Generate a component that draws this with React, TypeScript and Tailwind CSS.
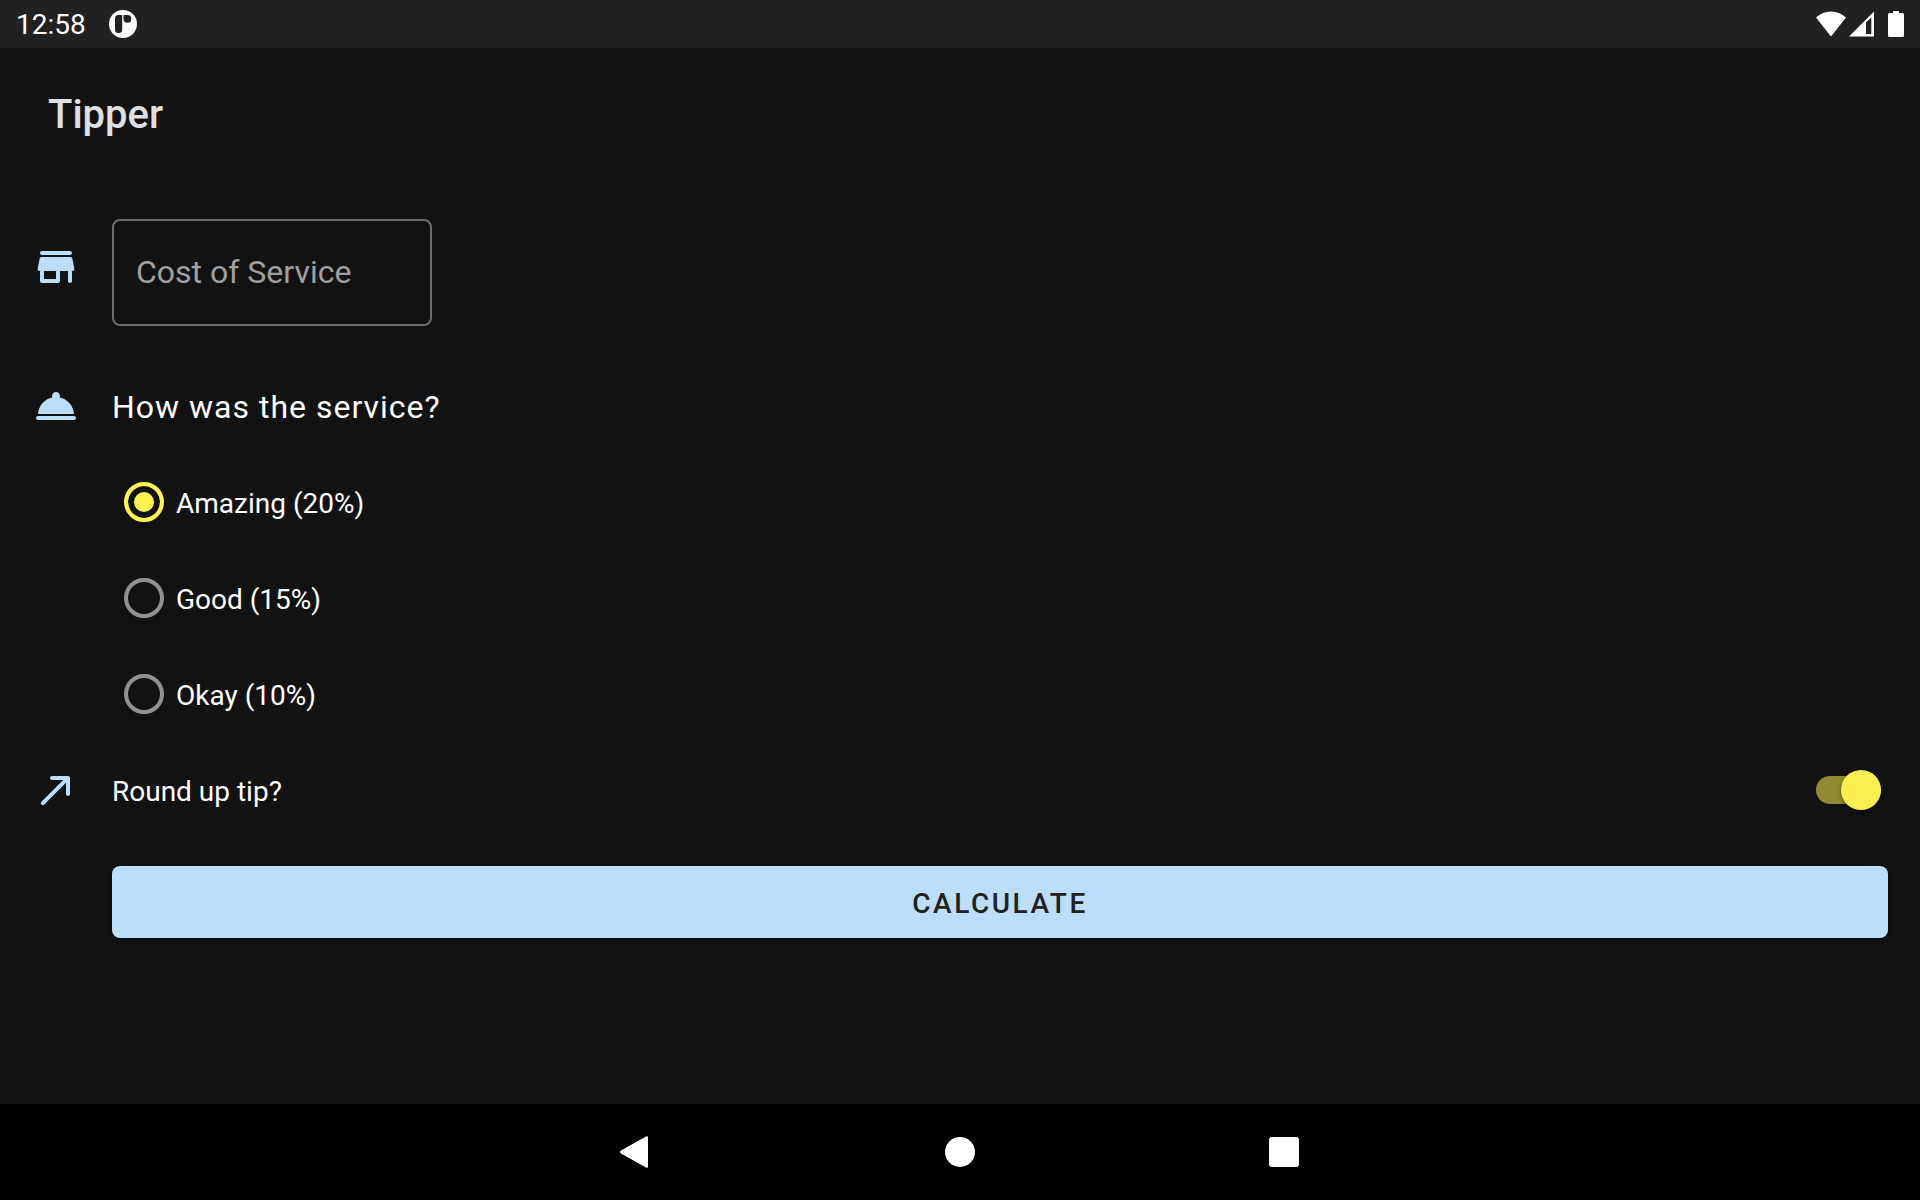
import { useState } from "react";

const ratings = ["Amazing (20%)", "Good (15%)", "Okay (10%)"];

const icons = {
  store:
    "M5 6h14c.55 0 1-.45 1-1s-.45-1-1-1H5c-.55 0-1 .45-1 1s.45 1 1 1zm15.16 1.8c-.09-.46-.5-.8-.98-.8H4.82c-.48 0-.89.34-.98.8l-1 5c-.12.62.35 1.2.98 1.2H4v5c0 .55.45 1 1 1h8c.55 0 1-.45 1-1v-5h4v5c0 .55.45 1 1 1s1-.45 1-1v-5h.18c.63 0 1.1-.58.98-1.2l-1-5zM12 18H6v-4h6v4z",
  roomService:
    "M3 17h18c.55 0 1 .45 1 1s-.45 1-1 1H3c-.55 0-1-.45-1-1s.45-1 1-1zm10.84-9.21c.1-.24.16-.51.16-.79 0-1.1-.9-2-2-2s-2 .9-2 2c0 .28.06.55.16.79C6.25 8.6 3.27 11.93 3 16h18c-.27-4.07-3.25-7.4-7.16-8.21z",
  callMade:
    "M9 6c0 .56.45 1 1 1h5.59L4.7 17.89c-.39.39-.39 1.02 0 1.41s1.02.39 1.41 0L17 8.41V14c0 .55.45 1 1 1s1-.45 1-1V6c0-.55-.45-1-1-1h-8c-.55 0-1 .45-1 1z",
};

function Icon({ path }: { path: string }) {
  return (
    <svg viewBox="0 0 24 24" className="size-12 shrink-0 fill-[#bbdefb]" aria-hidden="true">
      <path d={path} />
    </svg>
  );
}

function StatusBar() {
  return (
    <header className="flex h-12 items-center justify-between bg-[#212121] px-4 text-white">
      <div className="flex items-center gap-[23px]">
        <time className="pt-0.5 text-[28px] leading-8">12:58</time>
        <svg viewBox="0 0 28 28" className="size-7" aria-hidden="true">
          <circle cx="14" cy="14" r="14" fill="#fff" />
          <path d="M9.500 5H13.200V19.500a3.600 3.600 0 0 1-7.200 0V8.500A3.500 3.500 0 0 1 9.500 5z" fill="#212121" />
          <path d="M14.500 5h4a3.900 3.900 0 1 1-4 4z" fill="#212121" />
        </svg>
      </div>
      <div className="flex items-center">
        <svg viewBox="0 0 30 26" className="h-[26px] w-[30px]" aria-hidden="true">
          <path d="M0 6.500C4.300 2.500 9.500.5 15 .5s10.700 2 15 6L15 25.500z" fill="#fff" />
        </svg>
        <svg viewBox="0 0 26 26" className="ml-[3px] h-[26px] w-[26px]" aria-hidden="true">
          <path d="M25 .5v25H0z" fill="#fff" />
          <path d="M22.300 6.500V23H17V11.500z" fill="#212121" />
        </svg>
        <svg viewBox="0 0 16 26" className="ml-[13px] h-[26px] w-4" aria-hidden="true">
          <path d="M5 0h6v2h3.500q1.500 0 1.500 1.500v21q0 1.500-1.500 1.500h-13Q0 26 0 24.500v-21Q0 2 1.500 2H5z" fill="#fff" />
        </svg>
      </div>
    </header>
  );
}

function NavigationBar() {
  return (
    <nav className="flex h-24 items-center justify-center gap-[228px] bg-black">
      <button type="button" aria-label="Back" className="flex size-24 items-center justify-center">
        <svg viewBox="0 0 32 32" className="size-8 fill-white">
          <path d="M28 1.500v29q0 2-2 1L1 17.500q-2-1.500 0-3L26 .5q2-1 2 1z" />
        </svg>
      </button>
      <button type="button" aria-label="Home" className="flex size-24 items-center justify-center">
        <span className="size-[30px] rounded-full bg-white" />
      </button>
      <button type="button" aria-label="Recent apps" className="flex size-24 items-center justify-center">
        <span className="size-[30px] rounded-[3px] bg-white" />
      </button>
    </nav>
  );
}

export default function App() {
  const [rating, setRating] = useState(ratings[0]);
  const [roundUp, setRoundUp] = useState(true);

  return (
    <div className="flex min-h-screen flex-col bg-[#121212] font-['Roboto',sans-serif] text-white">
      <StatusBar />
      <div className="flex h-32 items-center px-12 pt-1.5">
        <h1 className="text-[40px] leading-12 font-medium text-[#e0e0e0]">Tipper</h1>
      </div>

      <main className="flex flex-1 flex-col px-8 pt-8">
        <div className="flex items-center gap-8">
          <Icon path={icons.store} />
          <div className="pt-[11px]">
            <input
              type="text"
              inputMode="decimal"
              aria-label="Cost of Service"
              placeholder="Cost of Service"
              className="block h-[107px] w-80 rounded-lg border-2 border-[#6b6b6b] bg-transparent px-[22px] pb-0.5 text-[32px] leading-10 outline-none placeholder:text-[#a0a0a0] placeholder:opacity-100 focus:border-[#bbdefb]"
            />
          </div>
        </div>

        <fieldset className="pt-14">
          <legend className="contents">
            <span className="flex items-center gap-8">
              <Icon path={icons.roomService} />
              <span className="pt-0.5 text-[32px] leading-10 tracking-[1px]">How was the service?</span>
            </span>
          </legend>
          <div className="flex flex-col items-start pt-6 pl-[92px]">
            {ratings.map((label) => (
              <label key={label} className="flex h-24 items-center gap-3 text-[28px] leading-8">
                <input
                  type="radio"
                  name="rating"
                  checked={rating === label}
                  onChange={() => setRating(label)}
                  className="size-10 appearance-none rounded-full border-4 border-[#919191] checked:border-[#fff350] checked:bg-[#fff350] checked:shadow-[inset_0_0_0_6px_#121212]"
                />
                <span className="pt-1">{label}</span>
              </label>
            ))}
          </div>
        </fieldset>

        <div className="flex h-24 items-center gap-8">
          <Icon path={icons.callMade} />
          <label htmlFor="round-up" className="flex-1 pt-1 text-[28px] leading-8">
            Round up tip?
          </label>
          <input
            id="round-up"
            type="checkbox"
            role="switch"
            checked={roundUp}
            onChange={(event) => setRoundUp(event.target.checked)}
            className="mr-[7px] flex h-7 w-[65px] appearance-none items-center rounded-full bg-[#5c5c5c] before:size-10 before:shrink-0 before:rounded-full before:bg-[#b9b9b9] before:shadow-[0_2px_4px_rgba(0,0,0,0.4)] checked:justify-end checked:bg-[#918a32] checked:before:bg-[#faed4f]"
          />
        </div>

        <button
          type="button"
          className="mt-7 ml-20 h-[72px] rounded-lg bg-[#bbdefb] pt-1 text-[28px] leading-8 font-medium tracking-[0.09em] text-[#212121] uppercase shadow-[0_2px_5px_rgba(0,0,0,0.5)]"
        >
          Calculate
        </button>
      </main>

      <NavigationBar />
    </div>
  );
}
